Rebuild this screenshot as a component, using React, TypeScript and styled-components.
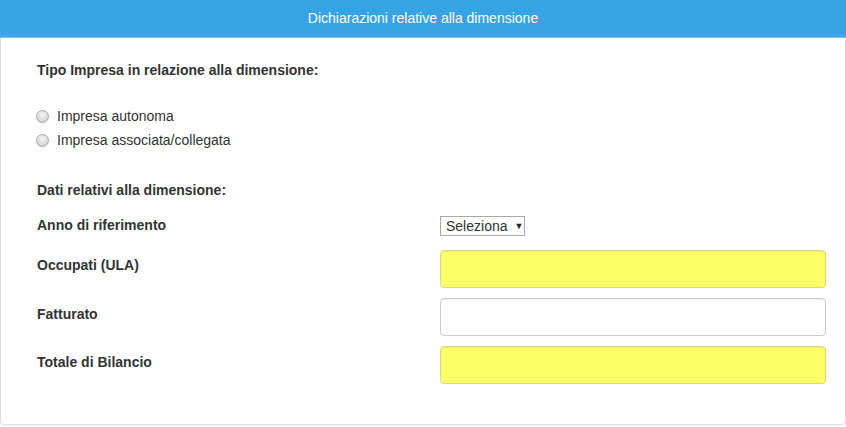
import styled, { createGlobalStyle } from "styled-components"

const GlobalStyle = createGlobalStyle`
	html, body {
		margin: 0;
		padding: 0;
		background: #fff;
	}
	body {
		font-family: "Liberation Sans", Arial, sans-serif;
		font-size: 14px;
		color: #333;
	}
`

const Panel = styled.section`
	box-sizing: border-box;
	width: 846px;
	height: 425px;
	border: 1px solid #ddd;
	border-top: none;
	border-radius: 0 0 4px 4px;
	background: #fff;
	display: flex;
	flex-direction: column;
`

const Heading = styled.header`
	height: 38px;
	box-sizing: border-box;
	margin: 0 -1px;
	background: #35a3e4;
	border-bottom: 1px solid #8fbcd8;
	box-shadow: inset 0 -4px 0 #3aa9ee;
	color: #fff;
	text-align: center;
	line-height: 36px;
	font-size: 14px;
`

const Body = styled.div`
	padding: 23px 20px 0 36px;
`

const SectionTitle = styled.h4<{ $gap: number }>`
	margin: 0 0 ${(p) => p.$gap}px;
	font-size: 14px;
	line-height: 18px;
	font-weight: bold;
	color: #333;
`

const RadioList = styled.div`
	display: flex;
	flex-direction: column;
	gap: 6px;
	margin-bottom: 32px;
`

const RadioRow = styled.label`
	display: flex;
	align-items: center;
	gap: 8px;
	margin-left: -1px;
	line-height: 18px;
	color: #333;
`

const RadioDot = styled.span`
	box-sizing: border-box;
	width: 13px;
	height: 13px;
	border-radius: 50%;
	border: 1px solid #a6a6a6;
	background: radial-gradient(circle at 50% 35%, #f4f4f4 0%, #dcdcdc 60%, #c8c8c8 100%);
`

const FieldList = styled.div`
	display: flex;
	flex-direction: column;
	gap: 11px;
	margin-top: 17px;
`

const FieldRow = styled.div<{ $compact?: boolean }>`
	display: grid;
	grid-template-columns: 403px 385px;
	align-items: start;
	height: ${(p) => (p.$compact ? "23px" : "37px")};
`

const FieldLabel = styled.span<{ $offset: number }>`
	padding-top: ${(p) => p.$offset}px;
	font-weight: bold;
	line-height: 19px;
	color: #333;
`

const SelectBox = styled.div`
	box-sizing: border-box;
	width: 85px;
	height: 20px;
	border: 1px solid #a9a9a9;
	display: flex;
	align-items: center;
	gap: 7px;
	padding-left: 5px;
	font-size: 14px;
	color: #333;
	background: #fff;
`

const Caret = styled.span`
	font-size: 9px;
	color: #222;
`

const TextInput = styled.input<{ $required?: boolean }>`
	box-sizing: border-box;
	width: 386px;
	height: 38px;
	margin: 0;
	border: 1px solid ${(p) => (p.$required ? "#d6d68a" : "#ccc")};
	border-radius: 4px;
	background: ${(p) => (p.$required ? "#ffff66" : "#fff")};
	box-shadow: inset 0 1px 1px rgba(0, 0, 0, 0.075);
	padding: 6px 12px;
	font-family: inherit;
	font-size: 14px;
	outline: none;
`

export default function App() {
	return (
		<>
			<GlobalStyle />
			<Panel>
				<Heading>Dichiarazioni relative alla dimensione</Heading>
				<Body>
					<SectionTitle $gap={28}>Tipo Impresa in relazione alla dimensione:</SectionTitle>
					<RadioList>
						<RadioRow>
							<RadioDot />
							Impresa autonoma
						</RadioRow>
						<RadioRow>
							<RadioDot />
							Impresa associata/collegata
						</RadioRow>
					</RadioList>
					<SectionTitle $gap={0}>Dati relativi alla dimensione:</SectionTitle>
					<FieldList>
						<FieldRow $compact>
							<FieldLabel $offset={0}>Anno di riferimento</FieldLabel>
							<SelectBox>
								Seleziona
								<Caret>▼</Caret>
							</SelectBox>
						</FieldRow>
						<FieldRow>
							<FieldLabel $offset={6}>Occupati (ULA)</FieldLabel>
							<TextInput $required />
						</FieldRow>
						<FieldRow>
							<FieldLabel $offset={7}>Fatturato</FieldLabel>
							<TextInput />
						</FieldRow>
						<FieldRow>
							<FieldLabel $offset={7}>Totale di Bilancio</FieldLabel>
							<TextInput $required />
						</FieldRow>
					</FieldList>
				</Body>
			</Panel>
		</>
	)
}
